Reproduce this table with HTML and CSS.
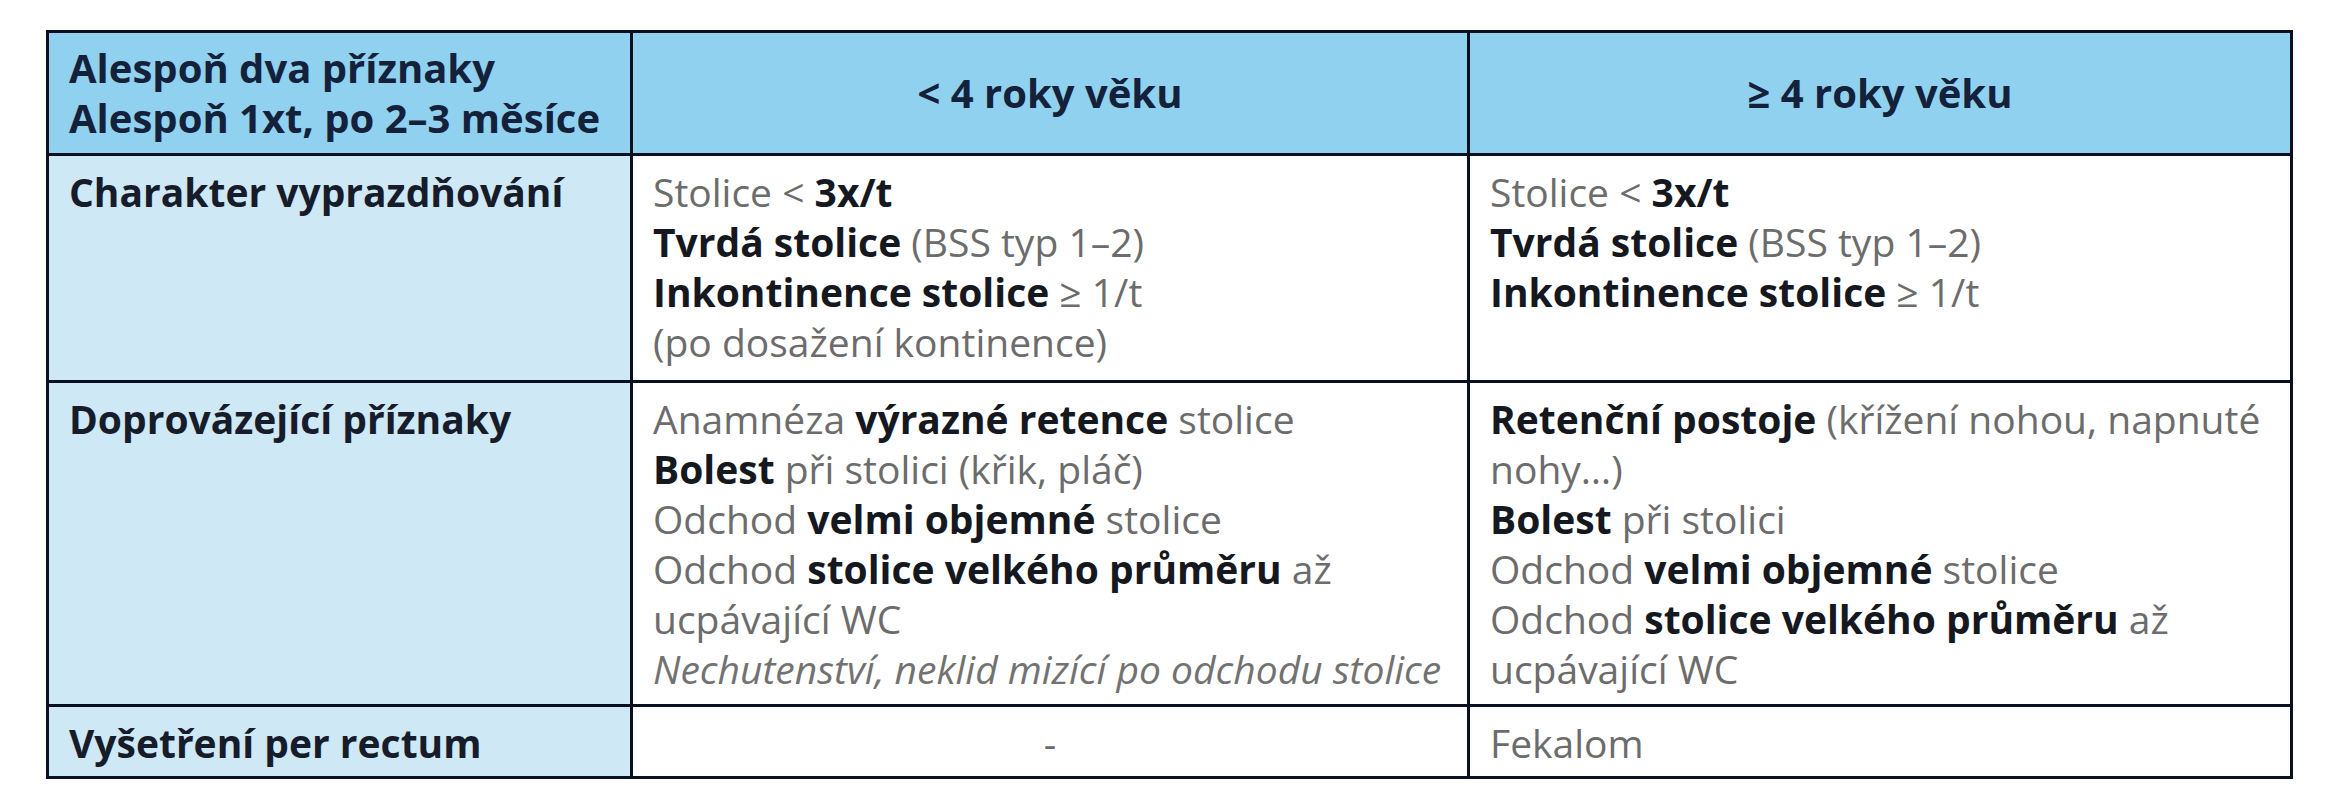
FILE: index.html
```html
<!DOCTYPE html>
<html lang="cs">
<head>
<meta charset="utf-8">
<title>Kritéria</title>
<link rel="stylesheet" href="styles.css">
</head>
<body>
<table class="crit">
  <colgroup>
    <col class="c1"><col class="c2"><col class="c3">
  </colgroup>
  <thead>
    <tr class="r-head">
      <th class="h-left">Alespoň dva příznaky<br>Alespoň 1xt, po 2–3 měsíce</th>
      <th class="h-mid">&lt; 4 roky věku</th>
      <th class="h-mid">≥ 4 roky věku</th>
    </tr>
  </thead>
  <tbody>
    <tr class="r1">
      <th class="rowname">Charakter vyprazdňování</th>
      <td>
        <div>Stolice &lt; <b>3x/t</b></div>
        <div><b>Tvrdá stolice</b> (BSS typ 1–2)</div>
        <div><b>Inkontinence stolice</b> ≥ 1/t</div>
        <div>(po dosažení kontinence)</div>
      </td>
      <td>
        <div>Stolice &lt; <b>3x/t</b></div>
        <div><b>Tvrdá stolice</b> (BSS typ 1–2)</div>
        <div><b>Inkontinence stolice</b> ≥ 1/t</div>
      </td>
    </tr>
    <tr class="r2">
      <th class="rowname">Doprovázející příznaky</th>
      <td>
        <div>Anamnéza <b>výrazné retence</b> stolice</div>
        <div><b>Bolest</b> při stolici (křik, pláč)</div>
        <div>Odchod <b>velmi objemné</b> stolice</div>
        <div>Odchod <b>stolice velkého průměru</b> <span>až</span><br><span>ucpávající WC</span></div>
        <div><i>Nechutenství, neklid mizící po odchodu stolice</i></div>
      </td>
      <td>
        <div><b>Retenční postoje</b> <span>(křížení nohou, napnuté</span><br><span>nohy…)</span></div>
        <div><b>Bolest</b> při stolici</div>
        <div>Odchod <b>velmi objemné</b> stolice</div>
        <div>Odchod <b>stolice velkého průměru</b> <span>až</span><br><span>ucpávající WC</span></div>
      </td>
    </tr>
    <tr class="r3">
      <th class="rowname">Vyšetření per rectum</th>
      <td class="center">-</td>
      <td>Fekalom</td>
    </tr>
  </tbody>
</table>
</body>
</html>
```
FILE: styles.css
```css
html, body {
  margin: 0;
  padding: 0;
  background: #ffffff;
}

body {
  padding: 30px 0 0 46px;
  font-family: "Open Sans", "Noto Sans", sans-serif;
}

.crit {
  border-collapse: collapse;
  table-layout: fixed;
  width: 2244px;
  border: 3px solid #0b1020;
}

.c1 { width: 584px; }
.c2 { width: 837px; }
.c3 { width: 823px; }

.crit th,
.crit td {
  border: 3px solid #0b1020;
  padding: 11px 20px 8px 20px;
  text-align: left;
  vertical-align: top;
  font-size: 39px;
  line-height: 50px;
  color: #6c6c6c;
  font-weight: 400;
}

.crit b {
  font-weight: 700;
  color: #15181f;
}

.crit i {
  font-style: italic;
  color: #727272;
}

.r-head { height: 123px; }
.r1 { height: 227px; }
.r2 { height: 324px; }
.r3 { height: 72px; }

.crit thead th {
  background: #8fd1ef;
  color: #14213a;
  font-size: 40px;
  font-weight: 700;
  vertical-align: middle;
  padding-top: 0;
  padding-bottom: 0;
}

.crit thead .h-mid {
  text-align: center;
}

.crit .rowname {
  background: #cfe8f6;
  color: #161c2a;
  font-weight: 700;
  font-size: 39px;
}

.crit .center {
  text-align: center;
}
```
